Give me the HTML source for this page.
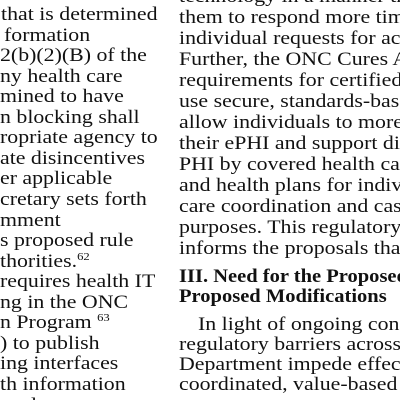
<!DOCTYPE html>
<html><head><meta charset="utf-8"><style>
html,body{margin:0;padding:0;background:#fff;width:400px;height:400px;overflow:hidden;position:relative}
.l{position:absolute;font-family:"Liberation Serif",serif;font-size:19px;line-height:20px;height:20px;color:#111;white-space:nowrap;transform:scaleX(1.15);transform-origin:0 0}
.b{font-weight:bold;transform:scaleX(1.08)}
sup{font-size:11px;line-height:0;vertical-align:baseline;position:relative;top:-7px}
</style></head><body>
<div class="l" style="left:1px;top:5px">that is determined</div>
<div class="l" style="left:4px;top:25.5px">formation</div>
<div class="l" style="left:0;top:46px">2(b)(2)(B) of the</div>
<div class="l" style="left:0;top:66.6px">ny health care</div>
<div class="l" style="left:0;top:87.2px">mined to have</div>
<div class="l" style="left:0;top:107.7px">n blocking shall</div>
<div class="l" style="left:0;top:128.3px">ropriate agency to</div>
<div class="l" style="left:0;top:148.8px">ate disincentives</div>
<div class="l" style="left:0;top:169.4px">er applicable</div>
<div class="l" style="left:0;top:190px">cretary sets forth</div>
<div class="l" style="left:0;top:210.5px">mment</div>
<div class="l" style="left:0;top:231px">s proposed rule</div>
<div class="l" style="left:0;top:251.6px">thorities.<sup>62</sup></div>
<div class="l" style="left:0;top:272.2px">requires health IT</div>
<div class="l" style="left:0;top:292.7px">ng in the ONC</div>
<div class="l" style="left:0;top:313.3px">n Program <sup>63</sup></div>
<div class="l" style="left:0;top:333.8px">) to publish</div>
<div class="l" style="left:0;top:354.4px">ing interfaces</div>
<div class="l" style="left:0;top:375px">th information</div>
<div class="l" style="left:0;top:395.5px">ated</div>

<div class="l" style="left:179px;top:-13px">technology in a manner that</div>
<div class="l" style="left:179px;top:8px">them to respond more timely</div>
<div class="l" style="left:179px;top:29px">individual requests for access.</div>
<div class="l" style="left:179px;top:50px">Further, the ONC Cures Act</div>
<div class="l" style="left:179px;top:71px">requirements for certified</div>
<div class="l" style="left:179px;top:92px">use secure, standards-based</div>
<div class="l" style="left:179px;top:113px">allow individuals to more</div>
<div class="l" style="left:179px;top:134px">their ePHI and support disclosure</div>
<div class="l" style="left:179px;top:155px">PHI by covered health care</div>
<div class="l" style="left:179px;top:176px">and health plans for individual</div>
<div class="l" style="left:179px;top:197px">care coordination and case</div>
<div class="l" style="left:179px;top:218px">purposes. This regulatory</div>
<div class="l" style="left:179px;top:239px">informs the proposals that</div>
<div class="l b" style="left:179px;top:267px">III. Need for the Proposed</div>
<div class="l b" style="left:179px;top:287px">Proposed Modifications</div>
<div class="l" style="left:198px;top:315px">In light of ongoing concerns</div>
<div class="l" style="left:179px;top:335px">regulatory barriers across the</div>
<div class="l" style="left:179px;top:355px">Department impede effective</div>
<div class="l" style="left:179px;top:375px">coordinated, value-based care</div>
</body></html>
